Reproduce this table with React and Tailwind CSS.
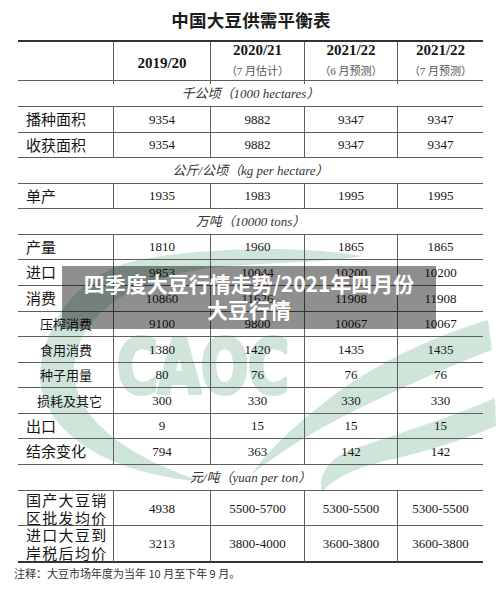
const serif = { fontFamily: '"Liberation Serif", "Noto Sans CJK SC", serif' };

const rows = [
  { label: '播种面积', h: 'h-[26px]', v: ['9354', '9882', '9347', '9347'] },
  { label: '收获面积', h: 'h-[25px]', v: ['9354', '9882', '9347', '9347'] },
  { unit: '公斤/公顷（kg per hectare）', h: 'h-[26px]' },
  { label: '单产', h: 'h-[25px]', v: ['1935', '1983', '1995', '1995'] },
  { unit: '万吨（10000 tons）', h: 'h-[26px]' },
  { label: '产量', h: 'h-[25px]', v: ['1810', '1960', '1865', '1865'] },
  { label: '进口', h: 'h-[26px]', v: ['9853', '10044', '10200', '10200'] },
  { label: '消费', h: 'h-[26px]', v: ['10860', '11626', '11908', '11908'] },
  { label: '压榨消费', sub: 'pl-[22px] text-[13px]', h: 'h-[25px]', v: ['9100', '9800', '10067', '10067'] },
  { label: '食用消费', sub: 'pl-[22px] text-[13px]', h: 'h-[26px]', v: ['1380', '1420', '1435', '1435'] },
  { label: '种子用量', sub: 'pl-[22px] text-[13px]', h: 'h-[25px]', v: ['80', '76', '76', '76'] },
  { label: '损耗及其它', sub: 'pl-[19px] text-[13px]', h: 'h-[26px]', v: ['300', '330', '330', '330'] },
  { label: '出口', h: 'h-[25px]', v: ['9', '15', '15', '15'] },
  { label: '结余变化', h: 'h-[26px]', v: ['794', '363', '142', '142'] },
  { unit: '元/吨（yuan per ton）', h: 'h-[26px]' },
];

const grid = 'grid grid-cols-[95px_97px_94px_93px_86px]';

function Watermark() {
  return (
    <svg className="absolute inset-0" width="500" height="595" viewBox="0 0 500 595">
      <g fill="#cfe5da">
        {/* left crescent */}
        <path d="M362,256 C300,246 200,246 130,262 C80,276 46,318 40,372 C38,428 102,474 205,482 C140,462 74,424 74,370 C76,312 140,272 230,266 C290,262 330,262 362,256 Z" />
        {/* right upper swoosh */}
        <path d="M488,320 C440,334 380,360 330,398 C295,425 268,450 252,474 C285,448 320,428 360,408 C410,384 460,362 492,350 Z" />
        {/* right lower swoosh with leaf */}
        <path d="M495,398 C450,418 390,436 345,452 C326,462 318,478 322,492 C336,476 360,466 398,458 C440,448 478,434 496,426 Z" />
        <text x="117" y="393" textLength="172" lengthAdjust="spacingAndGlyphs" fontSize="74" fontWeight="900" stroke="#cfe5da" strokeWidth="4" strokeLinejoin="round" fontFamily='"DejaVu Sans Condensed", "Liberation Sans", sans-serif'>CAOC</text>
      </g>
    </svg>
  );
}

function Cells({ v }) {
  return v.map((n, i) => (
    <div key={i} className="flex items-center justify-center border-l border-[#5e5e5e] text-[13px] text-[#161616]" style={serif}>{n}</div>
  ));
}

export default function App() {
  return (
    <div className="relative h-[595px] w-[500px] overflow-hidden bg-white text-[#161616]" style={{ fontFamily: '"Noto Sans CJK SC", sans-serif' }}>
      <Watermark />
      <div className="relative">
        <h1 className="flex h-[40px] items-center justify-center pl-[2px] text-[17.5px] font-bold tracking-[0.2px] text-[#1c1c1c]">中国大豆供需平衡表</h1>
        <div className="ml-[18px] w-[465px]">
          <div className={`${grid} h-[41px] border-t-2 border-b border-[#333] border-b-[#5e5e5e]`} style={serif}>
            <div />
            <div className="flex items-center justify-center border-l border-[#5e5e5e] text-[15px] font-bold">2019/20</div>
            {[['2020/21', '（7 月估计）'], ['2021/22', '（6 月预测）'], ['2021/22', '（7 月预测）']].map(([y, s], i) => (
              <div key={i} className="flex flex-col items-center border-l border-[#5e5e5e]">
                <span className="text-[15px] font-bold leading-[17px]">{y}</span>
                <span className="text-[11px] leading-[25px] text-[#555]">{s}</span>
              </div>
            ))}
          </div>
          <div className="flex h-[26px] items-center justify-center border-b border-[#5e5e5e] text-[13px] italic text-[#333]" style={serif}>千公顷（1000 hectares）</div>
          {rows.map((r, i) =>
            r.unit ? (
              <div key={i} className={`${r.h} flex items-center justify-center border-b border-[#5e5e5e] text-[13px] italic text-[#333]`} style={serif}>{r.unit}</div>
            ) : (
              <div key={i} className={`${grid} ${r.h} border-b border-[#5e5e5e]`}>
                <div className={`flex items-center ${r.sub || 'pl-[8px] text-[15px]'}`}>{r.label}</div>
                <Cells v={r.v} />
              </div>
            )
          )}
          <div className={`${grid} h-[35px] border-b border-[#5e5e5e]`}>
            <div className="flex flex-col justify-center pl-[8px] text-[15px] leading-[18px] tracking-[1.3px]">
              <span>国产大豆销</span>
              <span>区批发均价</span>
            </div>
            <Cells v={['4938', '5500-5700', '5300-5500', '5300-5500']} />
          </div>
          <div className={`${grid} h-[37px] border-b-2 border-[#333]`}>
            <div className="flex flex-col justify-center pl-[8px] text-[15px] leading-[18px] tracking-[1.3px]">
              <span>进口大豆到</span>
              <span>岸税后均价</span>
            </div>
            <Cells v={['3213', '3800-4000', '3600-3800', '3600-3800']} />
          </div>
        </div>
        <p className="mt-[3px] pl-[14px] text-[11px] leading-[14px] text-[#333]">注释：大豆市场年度为当年 10 月至下年 9 月。</p>
      </div>
      <div className="absolute left-[62px] top-[266px] h-[63px] w-[374px] bg-[rgba(0,0,0,0.44)] pt-[4px] text-center text-[21px] font-bold leading-[26px] text-white">
        <div>四季度大豆行情走势/2021年四月份</div>
        <div>大豆行情</div>
      </div>
    </div>
  );
}
